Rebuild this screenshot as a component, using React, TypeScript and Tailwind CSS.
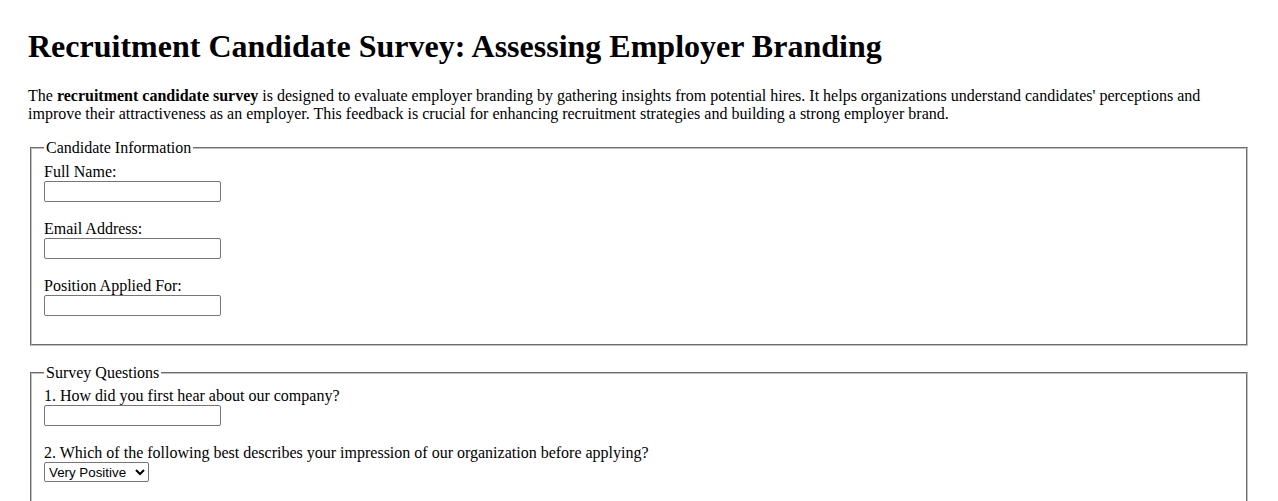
import React from "react";

const inputCls =
  "block w-[177px] h-[21px] border border-[#767676] rounded-[2px] bg-white px-[2px] text-[13.333px] [font-family:'Liberation_Sans',Arial,sans-serif]";

function Field({ label }: { label: string }) {
  return (
    <div>
      <label className="block leading-[18px]">{label}</label>
      <input type="text" className={inputCls} />
      <div className="h-[18px]" />
    </div>
  );
}

export default function App() {
  return (
    <div className="min-h-screen bg-white text-black px-[28px] pt-[28px] text-[16px] leading-[18px] [font-family:'Liberation_Serif','Times_New_Roman',serif]">
      <h1 className="text-[32px] font-bold leading-[37px]">
        Recruitment Candidate Survey: Assessing Employer Branding
      </h1>
      <p className="mt-[22px] mb-[16px] leading-[18px]">
        The <strong className="font-bold">recruitment candidate survey</strong> is designed to evaluate employer branding by
        gathering insights from potential hires. It helps organizations understand candidates' perceptions and improve
        their attractiveness as an employer. This feedback is crucial for enhancing recruitment strategies and building a
        strong employer brand.
      </p>

      <fieldset className="mx-[2px] border-2 [border-style:groove] border-[#c0c0c0] px-[12px] pt-[5.6px] pb-[10px]">
        <legend className="px-[2px] leading-[18px]">Candidate Information</legend>
        <Field label="Full Name:" />
        <Field label="Email Address:" />
        <Field label="Position Applied For:" />
      </fieldset>

      <fieldset className="mx-[2px] mt-[18px] border-2 [border-style:groove] border-[#c0c0c0] px-[12px] pt-[5.6px] pb-[10px]">
        <legend className="px-[2px] leading-[18px]">Survey Questions</legend>
        <Field label="1. How did you first hear about our company?" />
        <div>
          <label className="block leading-[18px]">
            2. Which of the following best describes your impression of our organization before applying?
          </label>
          <select className="block h-[20px] border border-[#767676] rounded-[2px] bg-white text-[13.333px] [font-family:'Liberation_Sans',Arial,sans-serif]">
            <option>Very Positive</option>
            <option>Positive</option>
            <option>Neutral</option>
            <option>Negative</option>
            <option>Very Negative</option>
          </select>
          <div className="h-[20px]" />
        </div>
        <Field label="3. What attracted you most to apply for this position?" />
        <Field label="4. How would you rate our recruitment process?" />
      </fieldset>
    </div>
  );
}
